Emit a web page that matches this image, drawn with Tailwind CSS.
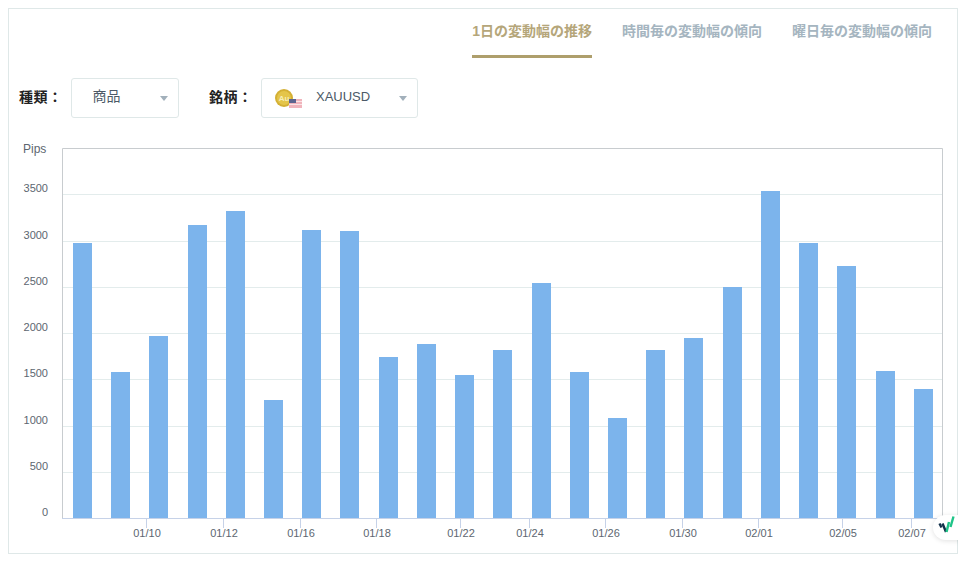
<!DOCTYPE html>
<html lang="ja">
<head>
<meta charset="UTF-8">
<title>変動幅</title>
<script src="https://cdn.jsdelivr.net/npm/@tailwindcss/browser@4"></script>
</head>
<body class="bg-white font-['Liberation_Sans','Noto_Sans_CJK_JP',sans-serif] overflow-hidden">
<div class="relative w-[971px] h-[562px] p-2">
  <div class="relative w-[950px] h-[546px] border border-[#dfe8e8] flex flex-col">

    <!-- tabs -->
    <div class="flex justify-end gap-[30px] pr-[25px] h-[49px] text-[14px] font-bold text-[#a5b5c0]">
      <div class="h-[49px] pt-[12px] leading-[20px] border-b-[3px] border-[#ae9f6c] text-[#b5a67a]">1日の変動幅の推移</div>
      <div class="pt-[12px] leading-[20px]">時間毎の変動幅の傾向</div>
      <div class="pt-[12px] leading-[20px]">曜日毎の変動幅の傾向</div>
    </div>

    <!-- filters -->
    <div class="flex items-center h-[40px] mt-[20px] pl-[10px] text-[14px]">
      <span class="w-[52px] font-bold text-[#222] tracking-[0.5px] -mt-[2px]">種類：</span>
      <div class="relative w-[108px] h-[40px] border border-[#dfe8e8] rounded-[3px] pl-[20.5px] leading-[35px] text-[#4c5a67]">
        商品
        <span class="absolute right-[10px] top-[17px] w-0 h-0 border-x-[4px] border-x-transparent border-t-[5px] border-t-[#a2b0bb]"></span>
      </div>
      <span class="ml-[30px] w-[52px] font-bold text-[#222] tracking-[0.5px] -mt-[2px]">銘柄：</span>
      <div class="relative w-[157px] h-[40px] border border-[#dfe8e8] rounded-[3px] leading-[36px] text-[#4c5a67] text-[13px] flex">
        <svg class="absolute left-[13px] top-[9px]" width="28" height="21" viewBox="0 0 28 21">
          <circle cx="9" cy="10" r="9" fill="#d4b034"/>
          <circle cx="9" cy="10" r="7" fill="#e4c54a"/>
          <text x="9" y="12.5" font-size="8" font-weight="700" text-anchor="middle" fill="#f6eeb8" font-family="Liberation Sans">Au</text>
          <rect x="14" y="11" width="13" height="9" fill="#f0b4bc"/>
          <rect x="14" y="13" width="13" height="1" fill="#fbe3e5"/>
          <rect x="14" y="16" width="13" height="1" fill="#fbe3e5"/>
          <rect x="14" y="11" width="7" height="4" fill="#5c6590"/>
        </svg>
        <span class="ml-[54px]">XAUUSD</span>
        <span class="absolute right-[10px] top-[17px] w-0 h-0 border-x-[4px] border-x-transparent border-t-[5px] border-t-[#a2b0bb]"></span>
      </div>
    </div>

    <!-- chart, drawn in page coordinates -->
    <svg id="chart" class="absolute left-[-9px] top-[-9px]" width="971" height="562" font-family="Liberation Sans" font-size="11"></svg>

    <!-- logo badge, cut off at the card's right edge -->
    <div class="absolute left-[924px] top-[506px] w-[38px] h-[25px] bg-white rounded-l-[13px] shadow-[0_1px_5px_rgba(0,0,0,0.12)] [clip-path:inset(-8px_13px_-8px_-8px)]">
      <svg class="absolute left-[4px] top-0" width="18" height="20" viewBox="937 515 18 20" fill="none" stroke-width="2.4">
        <path d="M939.5 523.5 L941.5 527.5" stroke="#12304a"/>
        <path d="M942.5 523.5 L946 532" stroke="#12304a"/>
        <path d="M946.5 532 L949 522" stroke="#1fc488"/>
        <path d="M950.5 527 L953.5 516.5" stroke="#1fc488"/>
      </svg>
    </div>
  </div>
</div>

<script>
  // bar edges and tops read off the plot
  const bars = [[73,243],[111,372],[149,336],[188,225],[226,211],[264,400],[302,230],[340,231],[379,357],[417,344],[455,375],[493,350],[532,283],[570,372],[608,418],[646,350],[684,338],[723,287],[761,191],[799,243],[837,266],[876,371],[914,389]];
  const grid = [[194,3500],[241,3000],[287,2500],[333,2000],[379,1500],[426,1000],[472,500],[518,0]];
  const ticks = [[146,"01/10"],[223,"01/12"],[300,"01/16"],[376,"01/18"],[460,"01/22"],[529,"01/24"],[605,"01/26"],[682,"01/30"],[758,"02/01"],[842,"02/05"],[911,"02/07"]];

  let svg = "";
  grid.forEach(([y, v]) => {
    if (v) svg += `<line x1="62" x2="942" y1="${y + .5}" y2="${y + .5}" stroke="#e3ecec"/>`;
    svg += `<text x="48" y="${y - 2}" text-anchor="end" fill="#5d6670">${v}</text>`;
  });
  svg += `<path d="M62.5 518V148.5H942.5V518" fill="none" stroke="#c8cccf"/>`;
  bars.forEach(([x, top]) => {
    svg += `<rect x="${x}" y="${top}" width="19" height="${518 - top}" fill="#7cb4ec"/>`;
  });
  svg += `<line x1="62" x2="943" y1="518.5" y2="518.5" stroke="#c6d2e8"/>`;
  ticks.forEach(([x, t]) => {
    svg += `<line x1="${x + .5}" x2="${x + .5}" y1="518" y2="528" stroke="#c6d2e8"/>`;
    svg += `<text x="${x + 1}" y="537" text-anchor="middle" fill="#5d6670">${t}</text>`;
  });
  svg += `<text x="23" y="153" fill="#5d6670" font-size="12">Pips</text>`;
  document.getElementById("chart").innerHTML = svg;
</script>
</body>
</html>
